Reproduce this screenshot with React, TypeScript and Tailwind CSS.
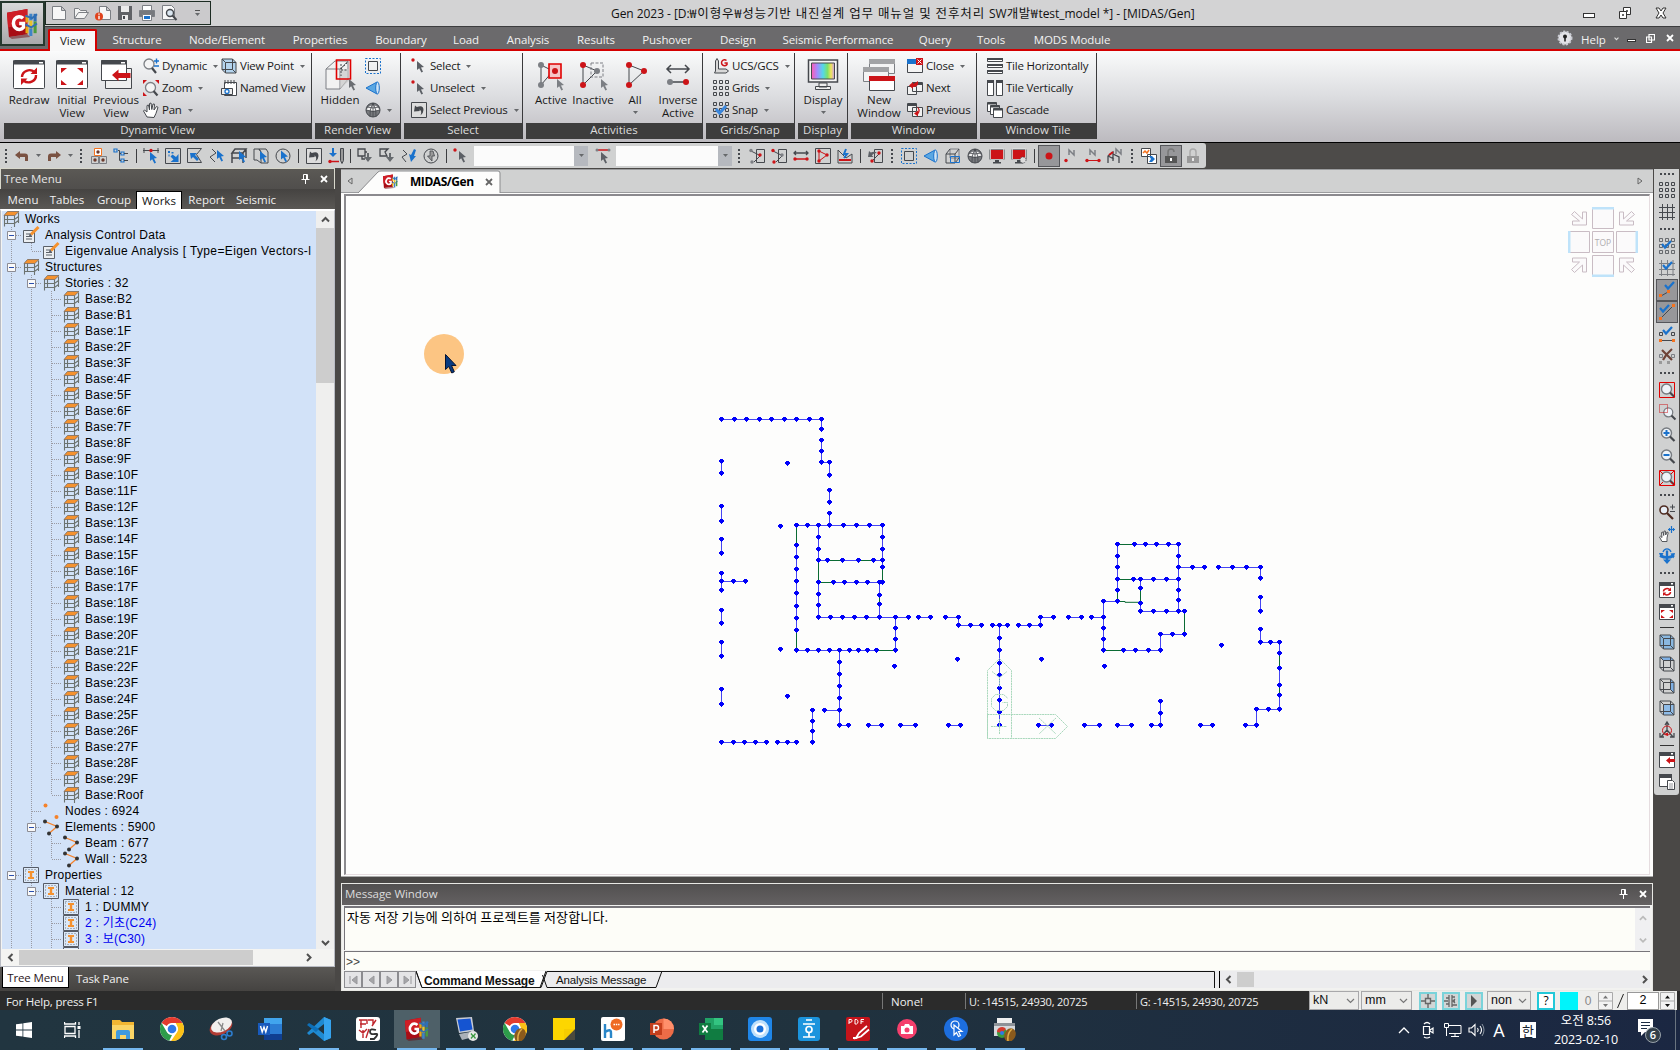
import React from "react";

const D = "#45484d";
const B = "#1a72cc";
const R = "#cc1418";
const O = "#f5731f";
const G = "#7c7f84";

const Arrow = ({ x = 0, y = 0, c = D }: { x?: number; y?: number; c?: string }) => (
  <path transform={`translate(${x} ${y})`} d="M0 0V9L2.2 7.2 4.4 11.5 6 10.7 4 6.5 7 6Z" fill={c} />
);
const Dot = ({ x, y, c = R, r = 1.7 }: { x: number; y: number; c?: string; r?: number }) => (
  <circle cx={x} cy={y} r={r} fill={c} />
);
const Check = ({ x = 0, y = 0 }: { x?: number; y?: number }) => (
  <path transform={`translate(${x} ${y})`} d="M4 3L7 6.500 13 0" fill="none" stroke={B} strokeWidth="2.2" />
);
const cube = (
  <path d="M1 1H11.5L15 4.5V15H4.5L1 11.5ZM4.5 4.5H15M4.5 4.5V15M1 1L4.5 4.5M1 11.5H11.5V1M11.5 11.5L15 15" fill="none" stroke={D} />
);
const squares = (
  <path d="M.5 .5h3v3h-3zM6.5 .5h3v3h-3zM12.5 .5h3v3h-3zM.5 6.5h3v3h-3zM6.5 6.5h3v3h-3zM12.5 6.5h3v3h-3zM.5 12.5h3v3h-3zM6.5 12.5h3v3h-3zM12.5 12.5h3v3h-3z" fill="none" stroke={D} />
);
const lens = (
  <>
    <circle cx="7.5" cy="7" r="5" fill="#eef3f8" stroke="#777b80" strokeWidth="1.4" />
    <path d="M11 10.5L15.5 15" stroke={D} strokeWidth="2.2" />
  </>
);
const win = (
  <>
    <path d="M.5 .5h15v15h-15z" fill="#fff" stroke={D} />
    <path d="M0 0h16v4H0z" fill={D} />
    <path d="M12 1h2v1.5h-2z" fill="#fff" />
  </>
);
const monitor = (
  <>
    <path d="M1 1.5h14v10h-14z" fill={R} stroke={D} />
    <path d="M1.5 1h13v10.5h-13z" fill="none" stroke="#f3f3f3" strokeWidth=".7" />
    <path d="M6 12h4v2H6zM4 14h8v1.5H4z" fill={D} />
  </>
);
const boxed = <path d="M.5 .5h15v15h-15z" fill="none" stroke={D} />;
const midasLogo = (
  <>
    <path d="M0 2.500L10.500 .5V13.500L1 15Z" fill="#a80d15" />
    <path d="M0 2.500L10.500 .5V8L.5 10Z" fill="#cf1e26" />
    <path d="M1 15L10.500 13.500 12 15 2.500 16Z" fill="#6e0a10" opacity=".5" />
    <path d="M8.300 5.300A3 3.300 0 1 0 8.500 10V8H6.300" fill="none" stroke="#fff" strokeWidth="1.800" />
    <path d="M10.300 4v3.500M10.300 9.500v3.500" stroke="#e8a915" strokeWidth="1.500" />
    <path d="M12.300 3v3.500M12.300 10.500v4" stroke="#3f83c6" strokeWidth="1.600" />
    <path d="M12.300 6.500v4" stroke="#e9c22a" strokeWidth="1.600" />
    <path d="M14.500 3v4" stroke="#2f6fb5" strokeWidth="1.600" />
    <path d="M14.500 7v6" stroke="#4b9b3d" strokeWidth="1.600" />
    <path d="M9.500 4l3.500 1.200L15.500 3.200M9.500 8.500l3 1.500 3-2" stroke="#2f6fb5" strokeWidth="1" fill="none" />
  </>
);

const icons: Record<string, React.ReactNode> = {
  logo: midasLogo,
  new: <path d="M1.5 1.5h9l4 4v9h-13zM10.5 1.5v4h4" fill="#f7f7f7" stroke={G} />,
  open: <path d="M1.5 13.5v-10h4l2 2h6v2M1.5 13.5l4-6h10l-4 6z" fill="#f3f3f3" stroke={G} />,
  info: (
    <>
      <path d="M4.5 1.5h7l4 4v9h-11zM11.5 1.5v4h4" fill="#f7f7f7" stroke={G} />
      <circle cx="4" cy="11.500" r="4" fill="#e0431d" />
      <path d="M4 8.500v1.300M4 10.800v3.500" stroke="#fff" strokeWidth="1.400" />
    </>
  ),
  save: (
    <>
      <path d="M1 1h14v14H1z" fill="#606266" />
      <path d="M4 1h8v6H4zM5 10h6v5H5z" fill="#ececec" />
      <path d="M6 11h2v3H6z" fill={D} />
    </>
  ),
  print: (
    <>
      <path d="M3.500 .5h9v5h-9z" fill="#fff" stroke={G} />
      <path d="M.5 5.500h15v6h-15z" fill="#77797d" stroke={G} />
      <path d="M3.500 9.500h9v6h-9z" fill="#fff" stroke={G} />
      <path d="M5 11h6v3H5z" fill={B} />
    </>
  ),
  preview: (
    <>
      <path d="M1.500 .5h9l3 3v11h-12z" fill="#f7f7f7" stroke={G} />
      <circle cx="9" cy="8" r="3.500" fill="#dce8f2" stroke={D} strokeWidth="1.400" />
      <path d="M11.500 10.500l4 4.500" stroke={D} strokeWidth="2" />
    </>
  ),
  dynamic: (
    <>
      <circle cx="6" cy="6" r="5" fill="#f4f4f4" stroke={G} strokeWidth="1.300" />
      <path d="M9 10l4 5" stroke={D} strokeWidth="2.200" />
      <path d="M11 3h5M13.500 .5v5M11 8h5" stroke={B} strokeWidth="1.400" />
    </>
  ),
  zoom: (
    <>
      <circle cx="7.500" cy="7.500" r="5" fill="#f4f4f4" stroke={G} strokeWidth="1.300" />
      <path d="M10.500 11l4 4.500" stroke={D} strokeWidth="2.200" />
      <path d="M0 0h4L0 4zM16 0h-4l4 4zM0 16v-4l4 4z" fill={R} />
    </>
  ),
  pan: <path d="M4 15l-3.500-6 1-1 2.500 2V3.500L5.500 3l1 5V1.500L8 1l.8 6.500L10 2l1.500.2L11 8l2.500-3.500 1.500.8-2 6-2 4.200z" fill="#fff" stroke={D} />,
  viewpoint: (
    <>
      <path d="M1 1H11.500L15 4.500V15H4.500L1 11.500Z" fill="#b4d4ee" />
      {cube}
    </>
  ),
  named: (
    <>
      <path d="M3.500 2.500h12v13h-12z" fill="#fff" stroke={D} />
      <path d="M4 0v4M7 0v4M10 0v4M13 0v4" stroke={D} />
      <path d="M.5 8.500h11v6H.5z" fill="#eee" stroke={D} />
      <circle cx="6" cy="11.500" r="2" fill="#fff" stroke={B} strokeWidth="1.300" />
    </>
  ),
  renderbox: (
    <>
      <path d="M3.500 3.500h9v9h-9z" fill="none" stroke={D} />
      <path d="M.5 .5h15v15h-15z" fill="none" stroke={B} strokeDasharray="2 1.500" />
    </>
  ),
  cone: (
    <>
      <path d="M1 8L12 2V14Z" fill="#5aa7e2" stroke={B} />
      <ellipse cx="12.500" cy="8" rx="1.800" ry="6" fill="#cfe4f5" stroke={B} />
    </>
  ),
  sphere: (
    <>
      <circle cx="8" cy="8" r="7" fill="#77797d" stroke={D} />
      <path d="M1.500 8A7 7 0 0 1 14.500 8Q8 10 1.500 8z" fill="#f2f2f2" />
      <path d="M1 8Q8 11 15 8M2 5Q8 7 14 5M8 1Q4 8 5 15M8 1Q12 8 11 15M8 1V15" fill="none" stroke={D} strokeWidth=".8" />
    </>
  ),
  select: (
    <>
      <Dot x={2} y={2} />
      <Arrow x={6} y={3} c="#5c6066" />
    </>
  ),
  selprev: (
    <>
      <path d="M.5 .5h15v15h-15z" fill="#ddd" stroke={D} />
      <path d="M3 9.500L4 3.500 5.800 5Q12.500 2.500 12.500 8 12.500 11 9.500 13.500 11.500 8.500 8 7.500L9 9z" fill={D} />
    </>
  ),
  ucs: (
    <>
      <path d="M2.500 13V3L4 .5 5.500 3V11H13l2.500 2-2.500 2H1.500z" fill="#d8d8d8" stroke={D} />
      <path d="M13.500 2.500A3 3 0 1 0 14 6.500V5H11.500" fill="none" stroke={R} strokeWidth="1.500" />
    </>
  ),
  grids: squares,
  snap: (
    <>
      {squares}
      <path d="M3 7L6.500 11 13 4" fill="none" stroke="#3b87dd" strokeWidth="3" />
    </>
  ),
  close: (
    <>
      <path d="M.5 1.500h15v13h-15z" fill="#f4f4f4" stroke={D} />
      <path d="M0 1h10v5H0z" fill={B} />
      <path d="M9 0h7v7H9z" fill={R} />
      <path d="M10.500 1.500l4 4M14.500 1.500l-4 4" stroke="#fff" />
    </>
  ),
  next: (
    <>
      <path d="M5.500 2.500h10v9h-10zM.5 6.500h9v8h-9z" fill="#f1f1f1" stroke={D} />
      <path d="M5.500 3h10v2h-10z" fill={D} />
      <path d="M2 5.500L6 2v2q4-2 5-3q1 6-5 6v2z" fill={R} />
    </>
  ),
  previous: (
    <>
      <path d="M.5 1.500h9v8h-9zM5.500 5.500h10v9h-10z" fill="#f1f1f1" stroke={D} />
      <path d="M1 2h9v2H1z" fill={D} />
      <path d="M10 4.500q5 3 1 8v2l-4-3 4-3v2q1-3-1-6z" fill={R} />
    </>
  ),
  tileh: (
    <>
      <path d="M.5 .5h15v3H.5zM.5 6.500h15v3H.5zM.5 12.500h15v3H.5z" fill="#fff" stroke={D} />
      <path d="M0 0h16v2H0zM0 6h16v2H0zM0 12h16v2H0z" fill={D} />
    </>
  ),
  tilev: (
    <>
      <path d="M.5 .5h6v15h-6zM9.500 .5h6v15h-6z" fill="#fff" stroke={D} />
      <path d="M0 0h7v3H0zM9 0h7v3H9z" fill={D} />
    </>
  ),
  cascade: (
    <>
      <path d="M.5 .5h9v9h-9z" fill="#fff" stroke={D} />
      <path d="M.5 .5h9v2h-9z" fill={D} />
      <path d="M3.500 3.500h9v9h-9z" fill="#fff" stroke={D} />
      <path d="M3.500 3.500h9v2h-9z" fill={D} />
      <path d="M6.500 6.500h9v9h-9z" fill="#fff" stroke={D} />
      <path d="M6.500 6.500h9v2h-9z" fill={D} />
    </>
  ),
  undo: <path d="M1 7l5-4v2.500h5q3 0 3 3V13h-3V9H6v2z" fill="#7a5242" />,
  redo: <path d="M15 7l-5-4v2.500H5q-3 0-3 3V13h3V9h5v2z" fill="#7a5242" />,
  t1: (
    <>
      <path d="M3.500 .5h7v7h-7z" fill="#fff" stroke={O} />
      <path d="M.5 8.500h7v7h-7zM8.500 8.500h7v7h-7z" fill="none" stroke={G} />
      <Dot x={7} y={4} c="#6b3a2c" />
      <Dot x={4} y={12} c="#6b3a2c" />
      <Dot x={12} y={12} c="#6b3a2c" />
    </>
  ),
  t2: (
    <>
      <path d="M1 1h3v3H1zM8 4h3v3H8zM8 11h3v3H8z" fill="none" stroke={B} strokeWidth="1.200" />
      <path d="M5 2.500h1.500V12.500H8M6.500 5.500H8M11 5.500h4M11 12.500h4" stroke={D} fill="none" />
    </>
  ),
  s1: (
    <>
      <path d="M0 2.500h16M1 0v5M15 0v5" stroke={D} />
      <Dot x={8} y={2.500} />
      <Arrow x={7} y={4} c={B} />
    </>
  ),
  s2: (
    <>
      {boxed}
      <path d="M13.500 6v8h-8l3-2.500-3-3 2-2 3.500 2.500z" fill={B} />
      <path d="M3 3h2v2H3zM6.500 4h2v1.500h-2zM3.500 6.500h1v2h-1z" fill={B} />
    </>
  ),
  s3: (
    <>
      <path d="M.5 .5h14l-5 6 5 8H.5z" fill="none" stroke={D} />
      <path d="M3 5h7L8 7l4 4-2 2-4-4-2 2z" fill={B} />
    </>
  ),
  s4: (
    <>
      <path d="M3 1l4 4-6 4 5 5" fill="none" stroke={D} />
      <Arrow x={8} y={2} c={B} />
    </>
  ),
  s5: (
    <>
      <path d="M4 1h11L12 5H1zM1 5v10M12 5v10M1 10h11M15 1v9" fill="none" stroke={D} strokeWidth="1.500" />
      <Arrow x={8} y={3} c={B} />
    </>
  ),
  s6: (
    <>
      <path d="M1 1h5l2 3v11l-4-3H1zM8 4L6 1h7l2 3v11H8" fill="none" stroke={D} />
      <Arrow x={7} y={3} c={B} />
    </>
  ),
  s7: (
    <>
      <circle cx="8" cy="8" r="7" fill="none" stroke={D} />
      <Arrow x={6} y={2.500} c={B} />
    </>
  ),
  s8: (
    <>
      <path d="M7 0h2v5h3L8 9 4 5h3z" transform="translate(-3 0)" fill={B} />
      <path d="M1 13.500h10" stroke={R} strokeWidth="1.500" />
      <path d="M12.500 .5h3v12l-1.500 3-1.500-3z" fill="#9a9a9a" stroke={D} />
      <Dot x={2} y={13.500} />
    </>
  ),
  p1: (
    <>
      <path d="M1 1h7v7H1zM8 4h2M5 8v3h3" fill="none" stroke={D} strokeWidth="1.300" />
      <path d="M10 5h2v4h3l-4 5-4-5h3z" fill="#666a6e" />
    </>
  ),
  p2: (
    <>
      <path d="M1 1h8L6 4l2 4H1z" fill="none" stroke={D} strokeWidth="1.300" />
      <path d="M10 5h2v4h3l-4 5-4-5h3z" fill="#666a6e" />
    </>
  ),
  p3: (
    <>
      <path d="M2 2l4 4-5 3 4 5" fill="none" stroke={D} />
      <path d="M13 1l2 1-2 6h2l-5 6-2-8 2 1z" fill={B} />
    </>
  ),
  p4: (
    <>
      <circle cx="8" cy="8" r="7" fill="none" stroke={D} />
      <path d="M7 3v5H4.500l4.500 5V8h2.500L10 3z" fill="#999" stroke={D} strokeWidth=".8" />
    </>
  ),
  linesel: (
    <>
      <path d="M1 2h13" stroke={R} strokeWidth="1.500" />
      <Dot x={2} y={2} r={1.500} c={G} />
      <Dot x={14} y={2} r={1.500} c={G} />
      <Arrow x={6} y={4} c="#5c6066" />
    </>
  ),
  a1: (
    <>
      <path d="M2 3l8 4M5 14l6-6" stroke={D} />
      <path d="M7.500 1.500h8v13h-8z" fill="none" stroke={D} />
      <Dot x={2} y={2.500} c={G} />
      <Dot x={11} y={7} />
      <Dot x={3} y={14} c={G} />
    </>
  ),
  a2: (
    <>
      <path d="M2 3l8 4M5 14l6-6" stroke={D} />
      <path d="M7.500 1.500h8v13h-8z" fill="none" stroke={D} />
      <Dot x={2} y={2.500} />
      <Dot x={11} y={7} c={G} />
      <Dot x={3} y={14} />
    </>
  ),
  a3: (
    <>
      <path d="M1 5h14M3 3L1 5l2 2M13 3l2 2-2 2" stroke={D} fill="none" strokeWidth="1.300" />
      <path d="M1 11h14" stroke={R} strokeWidth="1.500" />
      <Dot x={2} y={11} />
      <Dot x={14} y={11} />
    </>
  ),
  a4: (
    <>
      {boxed}
      <path d="M4 3v10l8-6z" fill="none" stroke={R} />
      <Dot x={4} y={3} />
      <Dot x={4} y={13} />
      <Dot x={12} y={7} />
    </>
  ),
  a5: (
    <>
      <path d="M1 2v13h14V6l-6 4z" fill="none" stroke={D} />
      <path d="M9 1l-2 5h3l-3 4" stroke={B} strokeWidth="2" fill="none" />
      <path d="M2 12h12" stroke={R} strokeWidth="2" />
    </>
  ),
  a6: (
    <>
      <path d="M7.500 1.500h8v13h-8z" fill="none" stroke={D} />
      <path d="M1 9L2 3l1.800 1.500Q8 3 10 5 6 5 5 7.500L6.500 9z" fill="#5c6066" />
      <path d="M5 13l7-7" stroke={D} />
      <Dot x={12} y={5} />
      <Dot x={5} y={13} />
    </>
  ),
  cubeblue: (
    <>
      <path d="M5 1h9v9H5z" fill="none" stroke={G} />
      <path d="M1 6h9v9H1zM1 6l4-5M10 6l4-5M10 15l4-5" fill="none" stroke={D} />
      <path d="M5.500 8.500h9v6h-9z" fill="none" stroke={B} />
    </>
  ),
  mon: monitor,
  mongear: (
    <>
      {monitor}
      <circle cx="12" cy="12" r="3" fill="#ddd" stroke={D} strokeDasharray="1 1" />
    </>
  ),
  reddot: <circle cx="8" cy="8" r="3.500" fill={R} />,
  n1: (
    <>
      <path d="M6 7V2L11 7V2" fill="none" stroke={G} strokeWidth="1.500" />
      <Dot x={3} y={12.500} />
    </>
  ),
  n2: (
    <>
      <path d="M5 7V2L10 7V2" fill="none" stroke={G} strokeWidth="1.500" />
      <path d="M2 12.500h12" stroke={R} />
      <Dot x={2} y={12.500} />
      <Dot x={14} y={12.500} />
    </>
  ),
  n3: (
    <>
      <path d="M9 6V1L14 6V1" fill="none" stroke={G} strokeWidth="1.500" />
      <path d="M1 15V8l5-4v9M6 6l6 3v6M1 8l6 3" fill="none" stroke={D} strokeWidth="1.300" />
      <path d="M2 7l4-3" stroke={R} strokeWidth="2" />
    </>
  ),
  post: (
    <>
      <path d="M.5 .5h9v8h-9zM6.500 6.500h9v9h-9z" fill="#fff" stroke={D} />
      <path d="M2 5l2-2 2 2 2-3" stroke={O} fill="none" strokeWidth="1.500" />
      <path d="M8 8h3l3 3-3 3H8l2-3z" fill={B} />
    </>
  ),
  unlock: (
    <>
      <path d="M5 8V4q0-3 3-3t3 3" fill="none" stroke="#777" strokeWidth="1.500" />
      <path d="M2 8h12v7H2z" fill="#555" />
      <path d="M7 10h2v3H7z" fill="#fff" />
    </>
  ),
  lock: (
    <>
      <path d="M5 8V4q0-3 3-3t3 3v4" fill="none" stroke="#aaa" strokeWidth="1.500" />
      <path d="M2 8h12v7H2z" fill="#999" />
      <path d="M7 10h2v3H7z" fill="#e8e8e8" />
    </>
  ),
  gridlines: <path d="M3.500 0v16M8.500 0v16M13.500 0v16M0 3.500h16M0 8.500h16M0 13.500h16" stroke={D} fill="none" />,
  r1: (
    <>
      <g opacity=".75">{squares}</g>
      <Check x={-1} y={3} />
    </>
  ),
  r2: (
    <>
      <path d="M2.500 0v16M8.500 0v16M14 0v16M0 3.500h16M0 9.500h16M0 14.500h16" stroke={G} fill="none" />
      <Check y={2} />
    </>
  ),
  r3: (
    <>
      <Check x={2} y={0} />
      <path d="M2 14l7-4" stroke={D} />
      <path d="M0 12h3v3H0zM8 8h3v3H8z" fill={O} />
    </>
  ),
  r4: (
    <>
      <path d="M2 14L14 2" stroke={D} />
      <path d="M0 13h3v3H0zM13 0h3v3h-3z" fill={O} />
      <Check x={-3} y={1} />
    </>
  ),
  r5: (
    <>
      <path d="M.5 6.500h3v3h-3zM12.500 6.500h3v3h-3z" fill="none" stroke={D} />
      <path d="M1 14.500h14" stroke={D} />
      <path d="M0 13h3v3H0zM13 13h3v3h-3z" fill={O} />
      <Check y={1} />
    </>
  ),
  r6: (
    <>
      <path d="M.5 6.500h3v3h-3zM12.500 6.500h3v3h-3z" fill="none" stroke={G} />
      <path d="M0 13h3v3H0zM8 13h3v3H8z" fill="#999" />
      <path d="M3 2l10 10M13 1Q7 6 4 12" stroke="#6f4438" strokeWidth="2.200" fill="none" />
    </>
  ),
  z1: (
    <>
      {lens}
      <path d="M.5 .5h15v15h-15z" fill="none" stroke="#e00000" />
    </>
  ),
  z2: (
    <>
      <g transform="translate(2.500 2) scale(.9)">{lens}</g>
      <path d="M.5 .5h8v8h-8z" fill="none" stroke={R} strokeDasharray="1 1" />
    </>
  ),
  z3: (
    <>
      {lens}
      <path d="M4.500 7h6M7.500 4v6" stroke={B} strokeWidth="2" />
    </>
  ),
  z4: (
    <>
      {lens}
      <path d="M4.500 7h6" stroke={B} strokeWidth="2" />
    </>
  ),
  z5: (
    <>
      {lens}
      <path d="M.5 .5h15v15h-15zM1 1l3 3M15 1l-3 3M1 15l3-3M15 15l-3-3" fill="none" stroke="#e00000" />
    </>
  ),
  m1: (
    <>
      <circle cx="5" cy="6" r="4" fill="#e6eef6" stroke="#4f2c22" strokeWidth="1.600" />
      <path d="M8 9l6 6" stroke="#4f2c22" strokeWidth="2.200" />
      <path d="M11 3h5M13.500 .5v5M11 7.500h5" stroke={D} />
    </>
  ),
  m2: (
    <>
      <path d="M3 15.500L.5 11l1-.8L3 11.500 2.500 6.500 4 6l.7 3.500L5 5l1.500.2L6.700 9 8 6l1.200.6L8 12v3.500z" fill="#fff" stroke={D} strokeWidth=".9" />
      <path d="M9 3.500h7M12.500 0v7M10.500 2v3M14.500 2v3" stroke={B} strokeWidth="1.200" />
    </>
  ),
  m3: (
    <>
      <path d="M1 7.500Q8 11.500 15 7.500" fill="none" stroke={B} strokeWidth="2.600" />
      <path d="M4 4Q5 .8 8 .8T12 4" fill="none" stroke={B} strokeWidth="1.300" />
      <path d="M6.800 2.500h2.400v9h2.800l-4 4.500-4-4.500h2.800zM0 5h4.500L2 10zM16 5l-4.500.500 3 5z" fill={B} />
    </>
  ),
  w1: (
    <>
      {win}
      <path d="M4.500 9.500a3.500 3 0 0 1 6.500-1.500M11.500 10a3.500 3 0 0 1-6.500 1.500" fill="none" stroke={R} strokeWidth="1.500" />
      <path d="M12 5.500V9H8.800zM4 14v-3.500h3.200z" fill={R} />
    </>
  ),
  w2: (
    <>
      {win}
      <path d="M2 6h4L2 9zM14 6h-4l4 3zM2 14h4l-4-3zM14 14h-4l4-3z" fill={R} />
    </>
  ),
  c1: (
    <>
      <path d="M1 1H11.500L15 4.500V15H4.500L1 11.500Z" fill="#8ab8e0" />
      {cube}
    </>
  ),
  c2: (
    <>
      <path d="M1 1H11.500L15 4.500H4.500Z" fill="#7fb0e4" />
      {cube}
    </>
  ),
  c3: (
    <>
      <path d="M11.500 1L15 4.500V15L11.500 11.500Z" fill="#7fb0e4" />
      {cube}
    </>
  ),
  c4: (
    <>
      <path d="M4.500 4.500H15V15H4.500Z" fill="#8fbce8" />
      {cube}
    </>
  ),
  axes: (
    <>
      <path d="M8 8V1M8 8L2 15M8 8l6 7M6 3l2-3 2 3M1 11v4h4M15 11v4h-4" stroke={D} fill="none" strokeWidth="1.300" />
      <circle cx="8" cy="8.500" r="4.500" fill="none" stroke={R} />
      <path d="M5 12l4-1.500v3.500z" fill={R} />
    </>
  ),
  w3: (
    <>
      {win}
      <path d="M7 8.500L11 5v2h5v3h-5v2z" fill={R} />
    </>
  ),
  w4: (
    <>
      <path d="M.5 .5h12v12H.5z" fill="#fff" stroke={D} />
      <path d="M0 0h13v4H0z" fill={D} />
      <path d="M8.500 6.500h5l2 2v7h-7z" fill="#fff" stroke={D} />
      <path d="M10 10h4M10 12h4M10 14h4" stroke={G} strokeWidth=".8" />
    </>
  ),
  story: (
    <>
      <path d="M1.500 15.500V4.500M11.500 16V4.500M15.500 12V1.500M1.500 8.500h10l4-3M1.500 12.500h10l4-3M4.500 4.500V13" stroke="#6c7370" fill="none" strokeWidth="1.100" />
      <path d="M1 4.500L4.500 .5H16L11.800 4.500Z" fill="#f5922f" stroke="#7a6a5c" strokeWidth=".8" />
    </>
  ),
  edit: (
    <>
      <path d="M.5 3.500h11v12H.5z" fill="#eceff2" stroke="#5b6068" />
      <path d="M3 7h5M3 9.500h6M3 12h6" stroke="#5b6068" />
      <path d="M8 7.500L15.500 0" stroke="#f5922f" strokeWidth="3" />
      <path d="M5.800 9.800l3.200-1-2.200-2.200z" fill="#5b6068" />
    </>
  ),
  nodes: (
    <>
      <Dot x={2.500} y={2.500} c="#f5822a" r={2} />
      <Dot x={13.500} y={14} c="#f5822a" r={2} />
    </>
  ),
  elems: (
    <>
      <path d="M2 2.500L14 7.500 6 14.500" fill="none" stroke="#f5822a" strokeWidth="1.300" />
      <Dot x={2} y={2.500} c="#333" r={2} />
      <Dot x={14} y={7.500} c="#333" r={2} />
      <Dot x={6} y={14.500} c="#333" r={2} />
    </>
  ),
  prop: (
    <>
      <path d="M.5 .5h15v15h-15z" fill="#dbe8f8" stroke="#565b66" />
      <path d="M2.500 2.500h11v11h-11z" fill="none" stroke="#565b66" strokeDasharray="1 2" strokeWidth=".8" />
      <path d="M5 4h6v2H9.200v4H11v2H5v-2h1.800V6H5z" fill="#f5922f" />
    </>
  ),
};

const Icon = ({ n, s = "size-4" }: { n: string; s?: string }) => (
  <svg viewBox="0 0 16 16" className={`${s} shrink-0 overflow-visible`}>
    {icons[n]}
  </svg>
);

const Caret = ({ className = "" }: { className?: string }) => (
  <svg viewBox="0 0 5 3" className={`h-[3px] w-[5px] shrink-0 ${className}`}>
    <path d="M0 0h5L2.500 3z" fill="#66686b" />
  </svg>
);

const Chev = ({ d, c = "#505050", s = "size-[9px]" }: { d: "u" | "d" | "l" | "r"; c?: string; s?: string }) => {
  const p = { u: "M1 6.500L4.500 3 8 6.500", d: "M1 3L4.500 6.500 8 3", l: "M6.500 1L3 4.500 6.500 8", r: "M3 1L6.500 4.500 3 8" }[d];
  return (
    <svg viewBox="0 0 9 9" className={s}>
      <path d={p} fill="none" stroke={c} strokeWidth="2" />
    </svg>
  );
};

const Pin = () => (
  <svg viewBox="0 0 9 10" className="h-[10px] w-[9px]">
    <path d="M2.500 .5h4v5h-4zM.5 5.500h8M4.500 6v4M5.500 1v4" fill="none" stroke="#fff" />
  </svg>
);
const X = ({ c = "#fff", s = "size-2" }: { c?: string; s?: string }) => (
  <svg viewBox="0 0 8 8" className={s}>
    <path d="M1 1l6 6M7 1L1 7" stroke={c} strokeWidth="1.800" />
  </svg>
);

/* ---------- title and tabs ---------- */

const tabs: [string, string][] = [
  ["Structure", "w-[80px]"],
  ["Node/Element", "w-[100px]"],
  ["Properties", "w-[86px]"],
  ["Boundary", "w-[76px]"],
  ["Load", "w-[54px]"],
  ["Analysis", "w-[70px]"],
  ["Results", "w-[66px]"],
  ["Pushover", "w-[76px]"],
  ["Design", "w-[66px]"],
  ["Seismic Performance", "w-[134px]"],
  ["Query", "w-[60px]"],
  ["Tools", "w-[52px]"],
  ["MODS Module", "w-[110px]"],
];

const Header = () => (
  <header className="relative h-[51px] shrink-0">
    <div className="flex h-[26px] items-center bg-[#d3d3d4]">
      <div className="ml-[45px] mt-[-1px] flex h-[24px] w-[166px] items-center border border-[#1c2b22] bg-[#cbcacc] pl-[2px]">
        {["new", "open", "info", "save", "print", "preview"].map((n) => (
          <div key={n} className="flex w-[22px] justify-center">
            <Icon n={n} />
          </div>
        ))}
        <div className="ml-[15px] flex flex-col items-center gap-[2px]">
          <div className="h-px w-[5px] bg-[#555]" />
          <Caret />
        </div>
      </div>
      <div className="ml-[400px] mt-[2px] w-[582px] whitespace-nowrap text-[12px] tracking-[-0.05px] text-[#111]">
        Gen 2023 - [D:
        <span className="text-[12.5px] tracking-[0.85px]">₩이형우₩성능기반 내진설계 업무 매뉴얼 및 전후처리 </span>
        SW
        <span className="text-[12.5px] tracking-[0.6px]">개발₩</span>
        test_model *] - [MIDAS/Gen]
      </div>
      <div className="ml-[390px] flex items-center gap-[22px]">
        <div className="mt-[5px] h-[5px] w-[12px] border border-[#333] bg-white" />
        <svg viewBox="0 0 12 12" className="ml-[2px] size-3">
          <path d="M4.500 .5h7v7h-7z" fill="#fff" stroke="#333" />
          <path d="M.5 4.500h7v7h-7z" fill="#fff" stroke="#333" />
          <path d="M3.500 7.500h1v1h-1zM7.500 3.500h1v1h-1z" fill="none" stroke="#333" />
        </svg>
        <svg viewBox="0 0 12 12" className="ml-[2px] size-3">
          <path d="M1 1h3l2 3 2-3h3L8 6l3 5H8L6 8l-2 3H1l3-5z" fill="#fff" stroke="#333" />
        </svg>
      </div>
    </div>
    <div className="flex h-[25px] items-end border-b-2 border-t border-b-[#d40000] border-t-[#3c3c3e] bg-[#6b6a6c] pl-[48px] text-[11.5px] text-[#f2f2f2]">
      <div className="relative mb-[-2px] flex h-[22px] w-[49px] items-center justify-center rounded-t-[2px] border-2 border-b-0 border-[#d40000] bg-[#f8f8f8] text-[#222]">View</div>
      {tabs.map(([t, w]) => (
        <div key={t} className={`flex h-[18px] items-center justify-center whitespace-nowrap tracking-[-0.1px] ${w}`}>
          {t}
        </div>
      ))}
      <div className="ml-[430px] flex h-[22px] items-center">
        <svg viewBox="0 0 16 16" className="size-4">
          <circle cx="8" cy="8" r="6.500" fill="#e3e3e8" stroke="#c9cbd2" strokeWidth="2" strokeDasharray="2 1.500" />
          <circle cx="8" cy="6.500" r="2" fill="#222" />
          <path d="M7.200 7h1.600v4.500H7.200z" fill="#222" />
        </svg>
        <span className="ml-[8px] mt-[3px] w-[24px]">Help</span>
        <span className="ml-[9px]"><Chev d="d" c="#ddd" s="size-[5px]" /></span>
        <div className="ml-[8px] mt-[5px] h-[3px] w-[9px] border border-[#333] bg-white" />
        <svg viewBox="0 0 9 9" className="ml-[10px] size-[9px]">
          <path d="M3 .5h5.500V6H3zM.5 3h5v5.500h-5z" fill="#6b6a6c" stroke="#fff" strokeWidth="1.200" />
        </svg>
        <span className="ml-[11px]"><X /></span>
      </div>
    </div>
    <div className="absolute left-0 top-[1px] flex h-[45px] w-[45px] items-center justify-center border-2 border-[#26382e] bg-gradient-to-b from-[#d9d9da] to-[#a9a8ab]">
      <Icon n="logo" s="size-[31px]" />
    </div>
  </header>
);

/* ---------- ribbon ---------- */

const Panel = ({ w, label, children }: { w: string; label: string; children: React.ReactNode }) => (
  <section className={`mr-[3px] flex h-[86px] shrink-0 flex-col border-r border-[#3a3a3c] ${w}`}>
    <div className="flex h-[70px] items-start pt-[2px]">{children}</div>
    <div className="flex h-[16px] items-center justify-center bg-[#3d3d3d] pb-[2px] text-[11.5px] text-[#dcdcdc]">{label}</div>
  </section>
);

const Big = ({ w, l1, l2, caret, children }: { w: string; l1: string; l2?: string; caret?: boolean; children: React.ReactNode }) => (
  <div className={`flex shrink-0 flex-col items-center ${w}`}>
    <svg viewBox="0 0 32 32" className="mt-[4px] size-8 overflow-visible">{children}</svg>
    <div className="mt-[2px] h-[13px] whitespace-nowrap text-[11.5px] leading-[13px]">{l1}</div>
    {l2 && <div className="h-[13px] whitespace-nowrap text-[11.5px] leading-[13px]">{l2}</div>}
    {caret && <Caret className="mt-[5px]" />}
  </div>
);

const Small = ({ n, t, caret }: { n: string; t?: string; caret?: boolean }) => (
  <div className="flex h-[22px] items-center whitespace-nowrap text-[11.5px]">
    <Icon n={n} />
    {t && <span className="ml-[3px] tracking-[-0.22px]">{t}</span>}
    {caret && <Caret className="ml-[6px]" />}
  </div>
);

const bigWin = (
  <>
    <path d="M.5 2.500q0-1 1-1h29q1 0 1 1v26q0 1-1 1h-29q-1 0-1-1z" fill="#fff" stroke={D} />
    <path d="M0 1.500h32v4H0z" fill={D} />
    <path d="M26 3h4v1.500h-4z" fill="#fff" />
  </>
);

const Ribbon = () => (
  <div className="flex h-[92px] shrink-0 border-b border-black bg-gradient-to-b from-[#fafbfb] via-[#dcdde0] to-[#bcbabf] pl-[4px] pt-[2px] text-[#1a1a1a]">
    <Panel w="w-[308px]" label="Dynamic View">
      <Big w="ml-[4px] w-[42px]" l1="Redraw">
        {bigWin}
        <path d="M9 18a7.500 7 0 0 1 12.500-5M23 16a7.500 7 0 0 1-12.500 5.500" fill="none" stroke={R} strokeWidth="2.400" />
        <path d="M24 8.500V15h-6.500zM8 26v-6.500h6.500z" fill={R} />
      </Big>
      <Big w="ml-[1px] w-[42px]" l1="Initial" l2="View">
        {bigWin}
        <path d="M5 9h6l-6 5zM27 9h-6l6 5zM5 26h6l-6-5zM27 26h-6l6-5z" fill={R} />
      </Big>
      <Big w="ml-[1px] w-[44px]" l1="Previous" l2="View">
        <path d="M5.500 9.500h26v20h-26z" fill="#eee" stroke={D} />
        <path d="M1.500 1.500h25v20h-25z" fill="#fff" stroke={D} />
        <path d="M1 1.500h26v4H1z" fill={D} />
        <path d="M21 3h4v1.500h-4z" fill="#fff" />
        <path d="M12 16l6.500-5.500v3.500h12v5h-12v3z" fill={R} />
      </Big>
      <div className="ml-[5px] w-[78px]">
        <Small n="dynamic" t="Dynamic" caret />
        <Small n="zoom" t="Zoom" caret />
        <Small n="pan" t="Pan" caret />
      </div>
      <div>
        <Small n="viewpoint" t="View Point" caret />
        <Small n="named" t="Named View" />
      </div>
    </Panel>
    <Panel w="w-[86px]" label="Render View">
      <Big w="ml-[4px] w-[42px]" l1="Hidden">
        <path d="M2 10L11 2h13v18l-8 10H2z" fill="#f2f2f2" stroke={G} />
        <path d="M2 10h14v20M16 10l8-8" fill="none" stroke={G} />
        <path d="M16 10h9v12l-9 8z" fill="#c9c9c9" opacity=".7" />
        <path d="M12.500 1h14v19h-14z" fill="none" stroke="#e00000" strokeWidth="1.600" />
        <path d="M17 5v12M17 10l7-7M17 11h6" stroke={D} strokeDasharray="2 1.500" />
        <Arrow x={25} y={20} c="#6a6d72" />
      </Big>
      <div className="ml-[4px]">
        <Small n="renderbox" />
        <Small n="cone" />
        <Small n="sphere" caret />
      </div>
    </Panel>
    <Panel w="w-[119px]" label="Select">
      <div className="ml-[7px]">
        <Small n="select" t="Select" caret />
        <Small n="select" t="Unselect" caret />
        <Small n="selprev" t="Select Previous" caret />
      </div>
    </Panel>
    <Panel w="w-[177px]" label="Activities">
      <Big w="ml-[4px] w-[42px]" l1="Active">
        <path d="M6 6v20L18 12z" fill="none" stroke={D} />
        <Dot x={6} y={6} c={G} r={3} />
        <Dot x={6} y={26} c={G} r={3} />
        <path d="M14 5h12v14H14z" fill="#f6c6c8" stroke="#e00000" strokeWidth="1.600" />
        <Dot x={20} y={12} r={3} />
        <Arrow x={22} y={20} c={G} />
      </Big>
      <Big w="w-[42px]" l1="Inactive">
        <path d="M6 6v20L20 12z" fill="none" stroke={D} />
        <Dot x={6} y={6} r={3} />
        <Dot x={6} y={26} r={3} />
        <path d="M14 4h12v14H14z" fill="none" stroke={G} strokeDasharray="3 1.500" />
        <Dot x={20} y={12} c={G} r={3} />
        <Arrow x={24} y={20} c={G} />
      </Big>
      <Big w="w-[42px]" l1="All" caret>
        <path d="M10 6v20L25 12z" fill="none" stroke={D} />
        <Dot x={10} y={6} r={3} />
        <Dot x={10} y={26} r={3} />
        <Dot x={25} y={12} r={3} />
      </Big>
      <Big w="w-[44px]" l1="Inverse" l2="Active">
        <path d="M5 10h22M9 6l-4 4 4 4M23 6l4 4-4 4" fill="none" stroke={D} strokeWidth="1.500" />
        <path d="M8 23h16" stroke={D} strokeWidth="1.500" />
        <Dot x={8} y={23} c={G} r={3} />
        <Dot x={24} y={23} r={3} />
      </Big>
    </Panel>
    <Panel w="w-[89px]" label="Grids/Snap">
      <div className="ml-[7px]">
        <Small n="ucs" t="UCS/GCS" caret />
        <Small n="grids" t="Grids" caret />
        <Small n="snap" t="Snap" caret />
      </div>
    </Panel>
    <Panel w="w-[50px]" label="Display">
      <Big w="w-[50px]" l1="Display" caret>
        <defs>
          <linearGradient id="rainbow">
            <stop offset="0" stopColor="#ff5bb0" />
            <stop offset=".25" stopColor="#a58bff" />
            <stop offset=".5" stopColor="#53d8e8" />
            <stop offset=".7" stopColor="#7de06a" />
            <stop offset=".85" stopColor="#f1e35a" />
            <stop offset="1" stopColor="#c79bf0" />
          </linearGradient>
        </defs>
        <path d="M1.500 1h29v22h-29z" fill="#f6f6f6" stroke={D} strokeWidth="1.500" />
        <path d="M4.500 4h23v16h-23z" fill="url(#rainbow)" stroke={D} />
        <path d="M12 24h8v4h-8zM8.500 27.500h15v3h-15z" fill="#eee" stroke={D} />
      </Big>
    </Panel>
    <Panel w="w-[126px]" label="Window">
      <Big w="ml-[4px] w-[48px]" l1="New" l2="Window">
        <path d="M6.500 .5h25v14h-25z" fill="#f4f4f4" stroke={G} />
        <path d="M6 0h26v5H6z" fill="#a2a3a5" />
        <path d="M.5 8.500h25v14H.5z" fill="#f4f4f4" stroke={G} />
        <path d="M0 8h26v5H0z" fill="#a2a3a5" />
        <path d="M6.500 17.500h25v14h-25z" fill="#fff" stroke={D} />
        <path d="M6 17h26v5H6z" fill={R} />
      </Big>
      <div className="ml-[4px]">
        <Small n="close" t="Close" caret />
        <Small n="next" t="Next" />
        <Small n="previous" t="Previous" />
      </div>
    </Panel>
    <Panel w="w-[117px]" label="Window Tile">
      <div className="ml-[7px]">
        <Small n="tileh" t="Tile Horizontally" />
        <Small n="tilev" t="Tile Vertically" />
        <Small n="cascade" t="Cascade" />
      </div>
    </Panel>
  </div>
);

/* ---------- tool strip ---------- */

const Cell = ({ n, on }: { n: string; on?: boolean }) => (
  <div className={`flex size-[22px] shrink-0 items-center justify-center ${on ? "border border-[#55565a] bg-[#97979a]" : ""}`}>
    <Icon n={n} />
  </div>
);
const Sep = ({ w }: { w: string }) => (
  <div className={`flex shrink-0 justify-center ${w}`}>
    <div className="h-[14px] w-px bg-[#3c3d40]" />
  </div>
);
const Grip = ({ w }: { w: string }) => (
  <div className={`flex shrink-0 flex-col items-center gap-[2px] ${w}`}>
    {[0, 1, 2, 3].map((i) => (
      <div key={i} className="size-[2px] bg-[#45484d]" />
    ))}
  </div>
);
const ComboBox = ({ w }: { w: string }) => (
  <div className={`flex h-[20px] shrink-0 justify-end bg-[#fbfbfb] ${w}`}>
    <div className="flex w-[14px] items-center justify-center bg-[#b6b9bf]">
      <Caret />
    </div>
  </div>
);
const cells = (s: string) => s.split(" ").map((n) => <Cell key={n} n={n} />);

const ToolStrip = () => (
  <div className="flex h-[25px] shrink-0 bg-[#4d4b49]">
    <div className="flex h-[25px] w-[1206px] items-center rounded-r-[3px] bg-[#d0d1d1]">
      <Grip w="w-[11px]" />
      <Cell n="undo" />
      <Caret className="mx-[2.5px]" />
      <Cell n="redo" />
      <Caret className="mx-[2.5px]" />
      <Grip w="w-[12px]" />
      <div className="w-px" />
      {cells("t1 t2")}
      <Sep w="w-[8px]" />
      {cells("s1 s2 s3 s4 s5 s6 s7")}
      <Sep w="w-[9px]" />
      {cells("selprev s8")}
      <Sep w="w-[7px]" />
      {cells("p1 p2 p3 p4")}
      <Sep w="w-[8px]" />
      <Cell n="select" />
      <ComboBox w="ml-[2px] w-[114px]" />
      <div className="ml-[4px]">
        <Cell n="linesel" />
      </div>
      <ComboBox w="ml-[2px] w-[116px]" />
      <Grip w="w-[14px]" />
      {cells("a1 a2 a3 a4 a5")}
      <Sep w="w-[8px]" />
      <Cell n="a6" />
      <Grip w="w-[12px]" />
      {cells("renderbox cone cubeblue sphere mon mongear")}
      <Sep w="w-[8px]" />
      <Cell n="reddot" on />
      {cells("n1 n2 n3")}
      <Grip w="w-[12px]" />
      <Cell n="post" />
      <Cell n="unlock" on />
      <Cell n="lock" />
    </div>
  </div>
);

/* ---------- tree ---------- */

type Row = { l: number; n: string; t: string; open?: boolean; blue?: boolean; wide?: boolean };
const stories = ["B2", "B1", ...Array.from({ length: 29 }, (_, i) => `${i + 1}F`), "Roof"];
const rows: Row[] = [
  { l: 0, n: "story", t: "Works" },
  { l: 1, n: "edit", t: "Analysis Control Data", open: true },
  { l: 2, n: "edit", t: "Eigenvalue Analysis [ Type=Eigen Vectors-l", wide: true },
  { l: 1, n: "story", t: "Structures", open: true },
  { l: 2, n: "story", t: "Stories : 32", open: true },
  ...stories.map((s) => ({ l: 3, n: "story", t: `Base:${s}` })),
  { l: 2, n: "nodes", t: "Nodes : 6924" },
  { l: 2, n: "elems", t: "Elements : 5900", open: true },
  { l: 3, n: "elems", t: "Beam : 677" },
  { l: 3, n: "elems", t: "Wall : 5223" },
  { l: 1, n: "prop", t: "Properties", open: true },
  { l: 2, n: "prop", t: "Material : 12", open: true },
  { l: 3, n: "prop", t: "1 : DUMMY" },
  { l: 3, n: "prop", t: "2 : 기초(C24)", blue: true },
  { l: 3, n: "prop", t: "3 : 보(C30)", blue: true },
  { l: 3, n: "prop", t: "" },
];

/* Dotted guide lines: one column per nesting level. */
const Guides = ({ row, i }: { row: Row; i: number }) => (
  <>
    {Array.from({ length: row.l }, (_, c) => {
      const last = c === row.l - 1;
      const later = rows.slice(i + 1);
      const stop = later.findIndex((r) => r.l <= c);
      const more = c < 2 || later.slice(0, stop < 0 ? undefined : stop).some((r) => r.l === c + 1);
      return (
        <svg key={c} viewBox="0 0 20 16" className="h-4 w-5 shrink-0">
          {(last || more) && !(row.wide && c === 1) && <path d={more ? "M8.500 0V16" : "M8.500 0V8"} stroke="#9a9aa2" strokeDasharray="1 1" />}
          {row.wide && c === 1 && <path d="M8.500 0V8" stroke="#9a9aa2" strokeDasharray="1 1" />}
          {last && <path d="M9 8.500H19" stroke="#9a9aa2" strokeDasharray="1 1" />}
          {last && row.open && (
            <>
              <path d="M4.500 4.500h8v8h-8z" fill="#fafafa" stroke="#8c8c94" />
              <path d="M6 8.500h5" stroke="#2a4fae" />
            </>
          )}
        </svg>
      );
    })}
  </>
);

const LeftPanel = () => (
  <aside className="flex w-[335px] shrink-0 flex-col bg-[#474543]">
    <div className="flex h-[21px] items-center justify-between border border-b-0 border-[#d8d8cc] bg-gradient-to-b from-[#5b5955] to-[#504e4c] pl-[3px] pr-[6px] text-[11.5px] text-[#e6e6e6]">
      <span>Tree Menu</span>
      <div className="flex items-center gap-[10px]">
        <Pin />
        <X />
      </div>
    </div>
    <div className="flex h-[20px] items-end bg-gradient-to-b from-[#454341] to-[#5a5855] text-[11.5px] text-[#f0f0f0]">
      {[
        ["Menu", "w-[38px] ml-[4px]"],
        ["Tables", "w-[50px]"],
        ["Group", "w-[44px]"],
        ["Works", "w-[46px] bg-white text-[#111] border border-b-0 border-black"],
        ["Report", "w-[49px]"],
        ["Seismic", "w-[50px]"],
      ].map(([t, c]) => (
        <div key={t} className={`flex h-[18px] items-center justify-center ${c}`}>
          {t}
        </div>
      ))}
    </div>
    <div className="flex h-[758px] flex-col border border-t-2 border-[#b9bcc4] border-t-white bg-[#f4f4f2]">
      <div className="flex h-[738px]">
        <div className="ml-[1px] w-[314px] overflow-hidden bg-[#d2e2f8] pl-[1px] text-[12px] text-black">
          {rows.map((r, i) => (
            <div key={i} className="flex h-4 items-center whitespace-nowrap font-['Liberation_Sans','Noto_Sans_CJK_KR',sans-serif] leading-4">
              <Guides row={r} i={i} />
              <Icon n={r.n} />
              <span className={`ml-[6px] ${r.wide ? "tracking-[0.38px]" : "tracking-[0.25px]"} ${r.blue ? "text-[#0000f0]" : ""}`}>{r.t}</span>
            </div>
          ))}
        </div>
        <div className="flex flex-1 flex-col items-center bg-[#efefee]">
          <div className="flex h-[17px] items-center"><Chev d="u" /></div>
          <div className="h-[155px] w-full bg-[#cdcdcd]" />
          <div className="mt-auto flex h-[14px] items-center"><Chev d="d" /></div>
        </div>
      </div>
      <div className="flex h-[17px] items-center">
        <div className="flex w-[18px] justify-center"><Chev d="l" /></div>
        <div className="h-[15px] w-[234px] bg-[#cdcdcd]" />
        <div className="ml-[51px]"><Chev d="r" /></div>
      </div>
    </div>
    <div className="flex flex-1 items-start bg-gradient-to-b from-[#5a5855] to-[#454341] text-[11.5px] text-[#f0f0f0]">
      <div className="ml-[2px] flex h-[21px] w-[67px] items-center justify-center border border-t-0 border-black bg-white pt-[2px] tracking-[-0.15px] text-[#2a1520]">Tree Menu</div>
      <div className="ml-[7px] flex h-[21px] items-center pt-[2px] tracking-[-0.15px]">Task Pane</div>
    </div>
  </aside>
);

/* ---------- model view ---------- */

type Chain = [axis: "h" | "v", at: number, stops: string];
type Plan = { ox: number; oy: number; chains: Chain[]; loose: [number, number][] };

/* Stops are node offsets in thirds of a pixel; "/" breaks the chain and "~" marks a wall drawn in green. */
const plans: Plan[] = [
  {
    ox: 700,
    oy: 400,
    chains: [
      ["h", 59, "65 102 140 177 215 252 289 327 364"],
      ["v", 364, "59 87 / 120 153 186"],
      ["h", 186, "364 389"],
      ["v", 389, "186 226 / 271 308 / 339 377"],
      ["v", 65, "183 219 / 318 363 / 418 459 / 519 543 570 / 630 669 / 726 768 / 869 912"],
      ["h", 543, "65 101 137"],
      ["h", 377, "289 321 354 389 429 468 507 547"],
      ["v", 289, "377 ~ 435 471 507 543 581 618 654 692 ~ 751"],
      ["v", 354, "377 412 447 482 ~ 547 582 617 651"],
      ["v", 547, "377 412 447 482 501 ~ 547"],
      ["h", 482, "354 381 ~ 426 474 ~ 519 547"],
      ["h", 547, "354 ~ 399 432 468 501 537 547"],
      ["v", 537, "547 586 ~ 612 651"],
      ["h", 651, "354 390 427 463 500 537 585 624 / 654 692 / 737 776"],
      ["v", 776, "651 677"],
      ["h", 677, "776 810 843 / 876 898 921"],
      ["v", 585, "651 685 718 751"],
      ["h", 751, "289 321 354 387 419 447 474 501 528 ~ 585"],
      ["v", 419, "751 788 824 860 895 930 976"],
      ["h", 930, "374 419"],
      ["h", 976, "419 444 / 504 544 / 600 645 / 744 780"],
      ["v", 336, "930 963 995 1027"],
      ["h", 1027, "65 99 132 165 198 / 231 261 288"],
      ["v", 898, "677 714 752 789 827 864 902 938 977"],
    ],
    loose: [[262, 189], [241, 380], [241, 748], [262, 890], [583, 798], [772, 777]],
  },
  {
    ox: 980,
    oy: 520,
    chains: [
      ["h", 317, "114 147 180"],
      ["v", 180, "291 317"],
      ["h", 291, "180 220 / 265 303 / 333 371"],
      ["v", 371, "244 291 325 358 391"],
      ["h", 244, "371 412"],
      ["v", 412, "72 108 142 178 210 ~ 244"],
      ["h", 72, "412 ~ 463 497 530 564 596"],
      ["v", 596, "72 108 143 178 210 242 274"],
      ["h", 143, "596 636 674 / 714 756 798 840"],
      ["v", 840, "143 174 / 233 273 / 329 367"],
      ["h", 178, "412 ~ 460 481 519 558 596"],
      ["v", 481, "178 204 ~ 249 274"],
      ["h", 274, "481 519 558 596 614"],
      ["v", 614, "274 ~ 344"],
      ["h", 344, "542 578 614"],
      ["v", 542, "344 391 / 543 579 616"],
      ["h", 391, "371 ~ 429 467 504 542"],
      ["h", 367, "840 870 899"],
      ["v", 899, "367 401 ~ 446 495 ~ 525 568"],
      ["h", 568, "828 864 899"],
      ["v", 828, "568 616"],
      ["h", 616, "176 213 / 312 357 / 411 453 / 513 542 / 660 696 / 795 828"],
    ],
    loose: [[183, 417], [373, 438], [724, 376]],
  },
];

const buildModel = () => {
  const lines: [number, number, number, number, boolean][] = [];
  const nodes = new Map<string, [number, number]>();
  plans.forEach(({ ox, oy, chains, loose }) => {
    const at = (x: number, y: number): [number, number] => [Math.floor(ox + x / 3), Math.floor(oy + y / 3)];
    const add = (p: [number, number]) => nodes.set(p.join(), p);
    loose.forEach(([x, y]) => add(at(x, y)));
    chains.forEach(([axis, c, stops]) => {
      let prev: [number, number] | null = null;
      let green = false;
      stops.split(" ").forEach((s) => {
        if (s === "/") prev = null;
        else if (s === "~") green = true;
        else {
          const p = axis === "h" ? at(+s, c) : at(c, +s);
          if (prev) lines.push([prev[0], prev[1], p[0], p[1], green]);
          add(p);
          prev = p;
          green = false;
        }
      });
    });
  });
  return { lines, nodes: [...nodes.values()] };
};
const model = buildModel();

const ModelView = () => (
  <svg viewBox="346 196 1303 678" className="h-[678px] w-[1303px] font-['Open_Sans',sans-serif]">
    <circle cx="444" cy="354" r="20" fill="#fcc583" />
    <path d="M445.500 354.500v15l3.300-3 3 6.500 2.500-1.200-2.800-6.300h4.500z" fill="#083a80" stroke="#05122e" />
    {model.lines.map(([a, b, c, d, g], i) => (
      <path key={i} d={`M${a + 0.5} ${b + 0.5}L${c + 0.5} ${d + 0.5}`} stroke={g ? "#0a6b34" : "#4646f2"} />
    ))}
    <path d="M1117.500 601.500h7.500v.8h15" fill="none" stroke="#0a6b34" />
    {model.nodes.map(([x, y]) => (
      <path key={`${x},${y}`} d={`M${x - 1} ${y - 2}h3v4h-3zM${x - 2} ${y - 1}h5v2h-5zM${x} ${y - 2}h1v5h-1z`} fill="#0000fa" />
    ))}
    <g fill="none" stroke="#a9d8bc" strokeDasharray="2 .6">
      <path d="M987.500 738.500V670.500L999.500 658.500 1011.500 670.500V738.500M987.500 714.500h68l12 12-12 12h-68zM992 671.500l7.500 6 7.500-6M999.500 677v10" />
      <path d="M1007.500 698l-4-3.500h-8l-4 4v8l4 4h8l4-4v-4h-5M991 726.500h16M999.500 719v15M1039 718l17 16M1056 718l-17 16" />
    </g>
    <g fill="#fbfafb" stroke="#c9bcc4">
      <path d="M1592.500 207.500h21v21h-21zM1568.500 231.500h21v21h-21zM1592.500 231.500h21v21h-21zM1616.500 231.500h21v21h-21zM1592.500 255.500h21v21h-21z" />
      <path d="M1571.500 214.500l3-3 8 7.500v-7h4v13h-14v-4h7zM1634.500 214.500l-3-3-8 7.500v-7h-4v13h14v-4h-7zM1571.500 269.500l3 3 8-7.500v7h4v-14h-14v4h7zM1634.500 269.500l-3 3-8-7.500v7h-4v-14h14v4h-7z" />
    </g>
    <path d="M1592 207h22v2.500h-22zM1568 231h2.500v22h-2.500zM1635.500 231h2.500v22h-2.500zM1592 274.500h22v2.500h-22z" fill="#bfe3fa" />
    <text x="1603" y="246" textAnchor="middle" fontSize="8.500" fill="#b0adaf">TOP</text>
  </svg>
);

const Center = () => (
  <main className="mt-[1px] flex w-[1312px] shrink-0 flex-col">
    <div className="flex h-[709px] flex-col border-b border-[#aaa] bg-[#fdfdfc]">
      <div className="flex h-[24px] items-center border-b border-t border-b-[#9b9c9e] border-t-[#9b9c9e] bg-[#d0d1d1]">
        <svg viewBox="0 0 6 8" className="ml-[6px] h-2 w-[6px]">
          <path d="M5 1v6L1 4z" fill="none" stroke="#666" />
        </svg>
        <div className="relative ml-[5px] mt-[1px] h-[23px] w-[143px]">
          <svg viewBox="0 0 143 23" className="absolute inset-0 h-[23px] w-[143px]">
            <path d="M0 23L20 2q1-1 3-1H140q2 0 2 2V23" fill="#fdfdfc" stroke="#8a8b8d" />
          </svg>
          <div className="relative flex h-full items-center pl-[25px]">
            <Icon n="logo" s="size-[15px]" />
            <span className="ml-[12px] w-[64px] whitespace-nowrap text-[12px] font-bold tracking-[-0.45px]">MIDAS/Gen</span>
            <span className="ml-[11px]"><X c="#666" s="size-[8px]" /></span>
          </div>
        </div>
        <svg viewBox="0 0 6 8" className="ml-auto mr-[10px] h-2 w-[6px]">
          <path d="M1 1v6L5 4z" fill="none" stroke="#666" />
        </svg>
      </div>
      <div className="ml-[3px] mt-[1px] h-[681px] w-[1306px] border border-l-2 border-t-2 border-[#e6dde0] border-l-[#8b8a8e] border-t-[#8b8a8e] bg-[#fdfdfc]">
        <ModelView />
      </div>
    </div>
    <div className="h-[6px] bg-[#4a4846]" />
    <section className="flex h-[108px] flex-col border border-[#e8e8e4] bg-[#f2f2f0]">
      <div className="flex h-[21px] shrink-0 items-center justify-between bg-gradient-to-b from-[#525050] to-[#646162] pb-[1px] pl-[3px] pr-[5px] text-[11.5px] text-[#dcdcdc]">
        <span className="tracking-[-0.05px]">Message Window</span>
        <div className="flex items-center gap-[11px]">
          <Pin />
          <X />
        </div>
      </div>
      <div className="mx-[2px] mt-[1px] flex h-[44px] shrink-0 justify-between border-l border-t-2 border-[#77757a] bg-[#fdfdf8]">
        <div className="pl-[2px] font-['Noto_Sans_CJK_KR',sans-serif] text-[13px] leading-[17px] tracking-[0.15px] text-black">자동 저장 기능에 의하여 프로젝트를 저장합니다.</div>
        <div className="flex w-[15px] flex-col items-center justify-between bg-[#f0f0f2] py-[6px]">
          <Chev d="u" c="#bbb" s="size-2" />
          <Chev d="d" c="#bbb" s="size-2" />
        </div>
      </div>
      <div className="mx-[2px] mt-px h-[19px] shrink-0 border-l border-t border-[#77757a] bg-[#fdfdf8] pl-[1px] font-['Liberation_Sans',sans-serif] text-[12px] leading-[21px] text-[#444]">&gt;&gt;</div>
      <div className="mx-[2px] mt-px flex h-[17px] items-center bg-[#ececee] font-['Liberation_Sans',sans-serif] text-[12px]">
        {["M3 1v8M10 1v8L5 5z", "M9 1v8L4 5z", "M4 1v8l5-4z", "M3 1v8l5-4zM10 1v8"].map((d) => (
          <div key={d} className="flex h-full w-[18px] items-center justify-center border border-[#8c8c90] bg-[#e4e4e6]">
            <svg viewBox="0 0 12 10" className="h-[10px] w-3">
              <path d={d} fill="#a5a5a8" stroke="#98989c" />
            </svg>
          </div>
        ))}
        <div className="relative h-full w-[800px]">
          <svg viewBox="0 0 800 17" className="absolute inset-0 h-[17px] w-[800px]">
            <path d="M0 0L6 16.500H125L131 .5H798.500V17" fill="none" stroke="#111" />
            <path d="M1 0L6 16H124L130 0z" fill="#fff" />
            <path d="M0 0L6 16.500M124 16.500L130 0M126.500 4L131 16.500H240L246 0" fill="none" stroke="#111" />
          </svg>
          <div className="relative flex h-full items-center whitespace-nowrap pt-[2px] text-[#111]">
            <span className="ml-[8px] w-[112px] font-bold tracking-[-0.15px]">Command Message</span>
            <span className="ml-[20px] text-[11.5px] tracking-[-0.15px]">Analysis Message</span>
          </div>
        </div>
        <div className="ml-[3px] flex h-full flex-1 items-center border-l border-black">
          <span className="ml-[4px]"><Chev d="l" /></span>
          <div className="ml-[4px] h-[15px] w-[17px] bg-[#cdcdcd]" />
          <span className="ml-auto mr-[1px]"><Chev d="r" /></span>
        </div>
      </div>
    </section>
  </main>
);

const VGrip = ({ h }: { h: string }) => (
  <div className={`flex shrink-0 items-center justify-center gap-[2px] ${h}`}>
    {[0, 1, 2, 3].map((i) => (
      <div key={i} className="size-[2px] bg-[#45484d]" />
    ))}
  </div>
);
const VSep = () => (
  <div className="flex h-[8px] shrink-0 items-center">
    <div className="h-px w-[14px] bg-[#333]" />
  </div>
);

const RightTools = () => (
  <div className="ml-[1px] mt-[1px] flex h-[626px] w-[25px] flex-col items-center rounded-b-[3px] bg-[#d0d1d1]">
    <VGrip h="h-[10px]" />
    {cells("grids gridlines")}
    <VGrip h="h-[12px]" />
    {cells("r1 r2")}
    <Cell n="r3" on />
    <Cell n="r4" on />
    {cells("r5 r6")}
    <VGrip h="h-[12px]" />
    {cells("z1 z2 z3 z4 z5")}
    <VGrip h="h-[12px]" />
    {cells("m1 m2 m3")}
    <VGrip h="h-[12px]" />
    {cells("w1 w2")}
    <VSep />
    {cells("c1 c2 c3 c4 axes")}
    <VSep />
    {cells("w3 w4")}
  </div>
);

/* ---------- status bar ---------- */

const UnitBox = ({ t, w }: { t: string; w: string }) => (
  <div className={`flex h-full shrink-0 items-center justify-between border border-[#a8a8aa] bg-[#ececea] px-[3px] ${w}`}>
    <span className="font-['Liberation_Sans',sans-serif] text-[12.5px] text-[#111]">{t}</span>
    <svg viewBox="0 0 9 9" className="size-[9px]">
      <path d="M1 3l3.500 3.500L8 3" fill="none" stroke="#777" strokeWidth="1.200" />
    </svg>
  </div>
);
const SmallBox = ({ w, children }: { w: string; children?: React.ReactNode }) => (
  <div className={`flex h-[18px] shrink-0 items-center justify-center border-2 border-[#7ad3da] bg-[#d2d6d6] ${w}`}>{children}</div>
);
const Spin = ({ c }: { c: string }) => (
  <svg viewBox="0 0 15 18" className="h-[18px] w-[15px] shrink-0">
    <path d="M.5 .5h14v17H.5zM.5 9h14" fill="#f2f2f2" stroke="#aaa" />
    <path d="M5 6.500h5L7.500 3.500zM5 12h5L7.500 15z" fill={c} />
  </svg>
);

const StatusBar = () => (
  <div className="flex h-[19px] shrink-0 items-center bg-[#2b2b2b] text-[11.5px] text-[#f0f0f0]">
    <div className="ml-[6px] w-[876px] pt-[2px] tracking-[-0.2px]">For Help, press F1</div>
    <div className="flex h-[16px] w-[83px] items-center border-l border-[#777] pl-[8px] pt-[2px]">None!</div>
    <div className="flex h-[16px] w-[171px] items-center whitespace-nowrap border-l border-[#777] pl-[3px] pt-[2px] text-[11px] tracking-[-0.2px]">U: -14515, 24930, 20725</div>
    <div className="flex h-[16px] w-[173px] items-center whitespace-nowrap border-l border-[#777] pl-[3px] pt-[2px] text-[11px] tracking-[-0.2px]">G: -14515, 24930, 20725</div>
    <div className="flex h-full w-[368px] items-center bg-[#eeeeec]">
      <UnitBox t="kN" w="w-[50px]" />
      <UnitBox t="mm" w="ml-[2px] w-[51px]" />
      <SmallBox w="ml-[7px] w-[18px]">
        <svg viewBox="0 0 14 14" className="size-[14px] shrink-0">
          <path d="M4.500 4.500h5v5h-5zM7 0v4M7 10v4M0 7h4M10 7h4" fill="none" stroke="#666" strokeWidth="1.400" />
        </svg>
      </SmallBox>
      <SmallBox w="ml-[5px] w-[18px]">
        <svg viewBox="0 0 14 14" className="size-[14px] shrink-0">
          <path d="M5 1v12M8 1v12M0 7h4M2 4h3M2 10h3M8 3h3M9 7h2M8 11h5M11 5l-2 2 2 2" fill="none" stroke="#666" strokeWidth="1.300" />
        </svg>
      </SmallBox>
      <SmallBox w="ml-[5px] w-[18px]">
        <svg viewBox="0 0 14 14" className="size-[14px] shrink-0">
          <path d="M4 1l6 6-6 6z" fill="#555" />
        </svg>
      </SmallBox>
      <UnitBox t="non" w="ml-[4px] w-[44px]" />
      <div className="ml-[6px] flex h-[18px] w-[18px] items-center justify-center border-2 border-[#22c8d8] bg-white text-[12px] text-black">?</div>
      <div className="ml-[5px] h-[18px] w-[18px] bg-[#00f4fb]" />
      <div className="ml-[2px] flex h-[18px] w-[16px] items-center justify-center font-['Liberation_Sans',sans-serif] text-[12px] text-[#888]">0</div>
      <div className="ml-[2px]"><Spin c="#777" /></div>
      <div className="ml-[4px] w-[7px]">
        <svg viewBox="0 0 7 14" className="h-[14px] w-[7px]">
          <path d="M6.500 0L.5 14" stroke="#222" />
        </svg>
      </div>
      <div className="ml-[3px] flex h-[18px] w-[32px] items-center justify-center border border-[#999] bg-white font-['Liberation_Sans',sans-serif] text-[12.5px] text-black">2</div>
      <div className="ml-[1px]"><Spin c="#111" /></div>
    </div>
  </div>
);

/* ---------- taskbar ---------- */

const chrome = (
  <>
    <circle cx="12" cy="12" r="12" fill="#fff" />
    <path d="M12 0a12 12 0 0 1 10.400 6H12a6 6 0 0 0-5.200 3L1.600 6A12 12 0 0 1 12 0z" fill="#e33b2e" />
    <path d="M1.600 6l5.200 9a6 6 0 0 0 5.200 3l-2.800 5.700A12 12 0 0 1 1.600 6z" fill="#2d9c4a" />
    <path d="M22.400 6a12 12 0 0 1-11.400 18l6.200-9a6 6 0 0 0 0-6l-1.500-3z" fill="#fbc116" />
    <circle cx="12" cy="12" r="5.500" fill="#fff" />
    <circle cx="12" cy="12" r="4.300" fill="#2f78e8" />
  </>
);
const nut = (
  <>
    <ellipse cx="17" cy="18" rx="5.500" ry="7" transform="rotate(25 17 18)" fill="#8a5a1c" />
    <path d="M19 12q-5 4-4 12" stroke="#e0ac45" strokeWidth="1.600" fill="none" />
  </>
);

const apps: { k: string; run?: boolean; on?: boolean; g: React.ReactNode }[] = [
  { k: "explorer", run: true, g: (<><path d="M1 3h8l2 2h12v17H1z" fill="#f2b632" /><path d="M1 8h22v14H1z" fill="#fbd566" /><path d="M5 22v-7q0-2 2-2h10q2 0 2 2v7h-4v-4H9v4z" fill="#3f9ade" /></>) },
  { k: "chrome", g: chrome },
  { k: "snip", g: (<><ellipse cx="12" cy="10" rx="12" ry="7.500" transform="rotate(-25 12 10)" fill="#b23c34" /><ellipse cx="12.500" cy="8" rx="11" ry="6.500" transform="rotate(-25 12.500 8)" fill="#f1efee" /><path d="M9 5l7 9M14 6l-2 8" stroke="#8a8a8a" strokeWidth="1.300" /><circle cx="15" cy="20" r="2.500" fill="none" stroke="#2d7ccc" strokeWidth="1.600" /><circle cx="20.500" cy="16.500" r="2.500" fill="none" stroke="#2d7ccc" strokeWidth="1.600" /></>) },
  { k: "word", g: (<><path d="M6 1h18v22H6z" fill="#2b7cd3" /><path d="M6 1h18v6H6z" fill="#41a5ee" /><path d="M6 17h18v6H6z" fill="#103f91" /><path d="M0 6h12v12H0z" fill="#185abd" /><path d="M2.500 9l1.700 6 1.800-5 1.800 5 1.700-6" fill="none" stroke="#fff" strokeWidth="1.400" /></>) },
  { k: "code", run: true, g: (<><path d="M17 0l7 3v18l-7 3L4 13l4-3 9 7V7L8 14 2 18 0 16 17 0z" fill="#1f8ad2" /><path d="M17 0l7 3v18l-7 3z" fill="#35a3ee" /><path d="M2 6L0 8l9 7 3-3z" fill="#0d6fb8" /></>) },
  { k: "ks", g: (<><rect width="24" height="24" rx="3" fill="#fff" /><path d="M3 3h8v4M4 7h6M5 3v8M12 3h5v5M20 3l-4 6M3 13l4 3 4-4M7 13v8M13 12l-3 9" fill="none" stroke="#c0262d" strokeWidth="1.400" /><path d="M20 13q-6-2-6 1.500t5 2.500-1 5h-4" fill="none" stroke="#333" strokeWidth="1.800" /></>) },
  { k: "gen", run: true, on: true, g: <g transform="scale(1.5)">{midasLogo}</g> },
  { k: "remote", run: true, g: (<><path d="M2 1l16-1 2 14-15 2z" fill="#c8ccd4" /><path d="M3.500 2.500l13-1 2 11-12.500 2z" fill="#1554d1" /><path d="M5 17l11-2 3 5-11 3z" fill="#aab0b8" /><circle cx="19" cy="19" r="5" fill="#e6e6e6" /><path d="M17 16.500l2 2.500-2 2.500M21.500 16.500l-2 2.500 2 2.500" stroke="#3a9a3f" strokeWidth="1.300" fill="none" /></>) },
  { k: "chromenut", run: true, g: (<>{chrome}{nut}</>) },
  { k: "notes", run: true, g: (<><path d="M1 1h22v22H1z" fill="#fdd600" /><path d="M12 23l11-11v11z" fill="#4c4a3c" /><path d="M12 23V12h11z" fill="#f2c500" opacity=".6" /></>) },
  { k: "hancom", run: true, g: (<><rect width="24" height="24" rx="2" fill="#fff" /><path d="M4 7v14M4 15q6-4 6 1v5" fill="none" stroke="#2a86c8" strokeWidth="2.400" /><circle cx="15.500" cy="7.500" r="6" fill="#ef6b22" /><path d="M12.500 7.500h6" stroke="#fff" strokeWidth="1.500" strokeDasharray="1.500 .8" /></>) },
  { k: "ppt", run: true, g: (<><circle cx="13.500" cy="12" r="10.500" fill="#ed6c47" /><path d="M13.500 1.500A10.500 10.500 0 0 1 24 12H13.500z" fill="#ff8f6b" /><path d="M0 6h12v12H0z" fill="#c43e1c" /><path d="M4 16V8.500h2.500q2 0 2 2.200T6.500 13H4" fill="none" stroke="#fff" strokeWidth="1.500" /></>) },
  { k: "xls", run: true, g: (<><path d="M6 1h18v22H6z" fill="#21a366" /><path d="M6 12h18v11H6z" fill="#107c41" /><path d="M15 1h9v7h-9z" fill="#33c481" /><path d="M0 6h12v12H0z" fill="#107c41" /><path d="M3.500 8.500l5 7M8.500 8.500l-5 7" stroke="#fff" strokeWidth="1.700" /></>) },
  { k: "disc", run: true, g: (<><rect width="24" height="24" rx="3" fill="#1f86e8" /><circle cx="12" cy="12" r="9" fill="#bfe0fb" /><circle cx="12" cy="12" r="6" fill="#fff" /><circle cx="12" cy="12" r="3.500" fill="#1a6fd8" /></>) },
  { k: "hwp", run: true, g: (<><rect x="1" width="22" height="24" rx="3" fill="#1b94dd" /><path d="M9 3h6M6 7h12M12 16v4M6 20h12" stroke="#fff" strokeWidth="1.700" /><circle cx="12" cy="12.500" r="3" fill="none" stroke="#fff" strokeWidth="1.700" /></>) },
  { k: "pdf", run: true, g: (<><rect width="24" height="24" rx="2" fill="#c5141b" /><path d="M3 7V2.500h2q1 0 1 1.300T5 5.200H3M9 2.500V7h1.500q1.500-.5 1.500-2.300T10.500 2.500zM15 7V2.500h3M15 4.700h2.500" fill="none" stroke="#fff" strokeWidth="1" /><path d="M21 9l-8 7-3 5 5-1.500 8-7M7 21h4" fill="none" stroke="#fff" strokeWidth="1.800" /></>) },
  { k: "cam", run: true, g: (<><circle cx="12" cy="12" r="10" fill="#f53f6c" /><path d="M6 9h3l1-2h4l1 2h3v8H6z" fill="#fff" /><circle cx="12" cy="13" r="2.500" fill="#f53f6c" /></>) },
  { k: "touch", run: true, g: (<><circle cx="12" cy="12" r="12" fill="#1d6ede" /><circle cx="11" cy="8" r="4" fill="none" stroke="#fff" strokeWidth="1.200" /><path d="M10 8v10l2.500-2.500 2 4 2-1-2-4h3.500z" fill="#1d6ede" stroke="#fff" strokeWidth="1.200" /></>) },
  { k: "printnut", run: true, g: (<><path d="M4 1h15v7H4z" fill="#eee" /><path d="M1 6h21v13H1z" fill="#d5d8dc" /><path d="M1 6h21v3H1z" fill="#8d9298" /><circle cx="9" cy="16" r="5" fill="#3a9a3f" /><path d="M4 15a5 5 0 0 1 9-3l-4 4z" fill="#d43b2e" /><circle cx="9" cy="16" r="2" fill="#2f78e8" />{nut}</>) },
];

const Taskbar = () => (
  <footer className="flex h-[40px] shrink-0 bg-gradient-to-r from-[#213540] via-[#20323e] to-[#1b2742] text-white">
    <div className="flex w-[48px] items-center justify-center">
      <svg viewBox="0 0 16 16" className="size-4">
        <path d="M0 2.300L6.500 1.400V7.600H0zM7.300 1.300L16 0V7.600H7.300zM0 8.400h6.500v6.200L0 13.700zM7.300 8.400H16V16L7.300 14.700z" fill="#fff" />
      </svg>
    </div>
    <div className="mr-[2px] flex w-[48px] items-center justify-center">
      <svg viewBox="0 0 17 16" className="h-4 w-[17px]">
        <path d="M1 4.500h10v7H1zM.5 0v2H11.500V0M.5 16v-2H11.500v2M15 0v3M15 8v8" fill="none" stroke="#fff" strokeWidth="1.300" />
        <path d="M13.500 4h3v3h-3z" fill="#fff" />
      </svg>
    </div>
    {apps.map((a) => (
      <div key={a.k} className="flex w-[49px] shrink-0 flex-col items-center">
        <div className={`flex h-[38px] items-center justify-center ${a.on ? "w-[46px] bg-[#4e6068]" : "w-[40px]"}`}>
          <svg viewBox="0 0 24 24" className="size-6">{a.g}</svg>
        </div>
        <div className={`h-[2px] w-[40px] ${a.run ? "bg-[#75b7ee]" : ""}`} />
      </div>
    ))}
    <div className="ml-auto flex items-center">
      <svg viewBox="0 0 12 8" className="h-2 w-3"><path d="M1 7l5-5 5 5" fill="none" stroke="#fff" strokeWidth="1.300" /></svg>
      <svg viewBox="0 0 14 18" className="ml-[11px] h-[18px] w-[14px]">
        <path d="M2.500 5.500h6v8h-6zM9 9l3-2v5l-3-2M3 3q3-3 6 0M3 16q3 2 6 0" fill="none" stroke="#fff" strokeWidth="1.200" />
      </svg>
      <svg viewBox="0 0 18 14" className="ml-[9px] h-[14px] w-[18px]">
        <path d="M5 2.500h12v8H5M11 11v2.500M7 13.500h8M.5 .5h4v4h-4zM2.500 5v8" fill="none" stroke="#fff" />
      </svg>
      <svg viewBox="0 0 17 14" className="ml-[6px] h-[14px] w-[17px]">
        <path d="M1 5h2.500L7 1.500v11L3.500 9H1zM9.500 5q1.500 2 0 4M12 3q3 4 0 8" fill="none" stroke="#fff" strokeWidth="1.100" />
        <path d="M14 1q4 6 0 12" fill="none" stroke="#8d97a2" />
      </svg>
      <span className="ml-[7px] w-[14px] text-center text-[18px]">A</span>
      <span className="ml-[14px] flex size-[16px] items-center justify-center bg-white font-['Noto_Sans_CJK_KR',sans-serif] text-[13px] leading-none text-[#16202c]">한</span>
      <div className="ml-[13px] w-[74px] whitespace-nowrap text-center text-[12.5px] leading-[19px] tracking-[-0.1px]">
        <div>오전 8:56</div>
        <div>2023-02-10</div>
      </div>
      <svg viewBox="0 0 26 26" className="ml-[14px] mr-[12px] size-[26px] font-['Open_Sans',sans-serif]">
        <path d="M1 2h15v13H8l-4 4v-4H1z" fill="#fff" />
        <path d="M4 5.500h9M4 8.500h9M4 11.500h6" stroke="#1b2a42" />
        <circle cx="16" cy="18" r="7.500" fill="#33404a" stroke="#9aa3ab" />
        <text x="16" y="22" textAnchor="middle" fontSize="11" fontWeight="600" fill="#fff">6</text>
      </svg>
      <div className="mr-[4px] h-[40px] w-px bg-[#6a7480]" />
    </div>
  </footer>
);

export default function App() {
  return (
    <div className="flex h-[1050px] w-[1680px] flex-col overflow-hidden bg-[#4a4846] font-['Open_Sans','Noto_Sans_CJK_KR',sans-serif] leading-none">
      <Header />
      <Ribbon />
      <ToolStrip />
      <div className="flex h-[823px] shrink-0">
        <LeftPanel />
        <div className="w-[6px] shrink-0" />
        <Center />
        <RightTools />
      </div>
      <StatusBar />
      <Taskbar />
    </div>
  );
}
